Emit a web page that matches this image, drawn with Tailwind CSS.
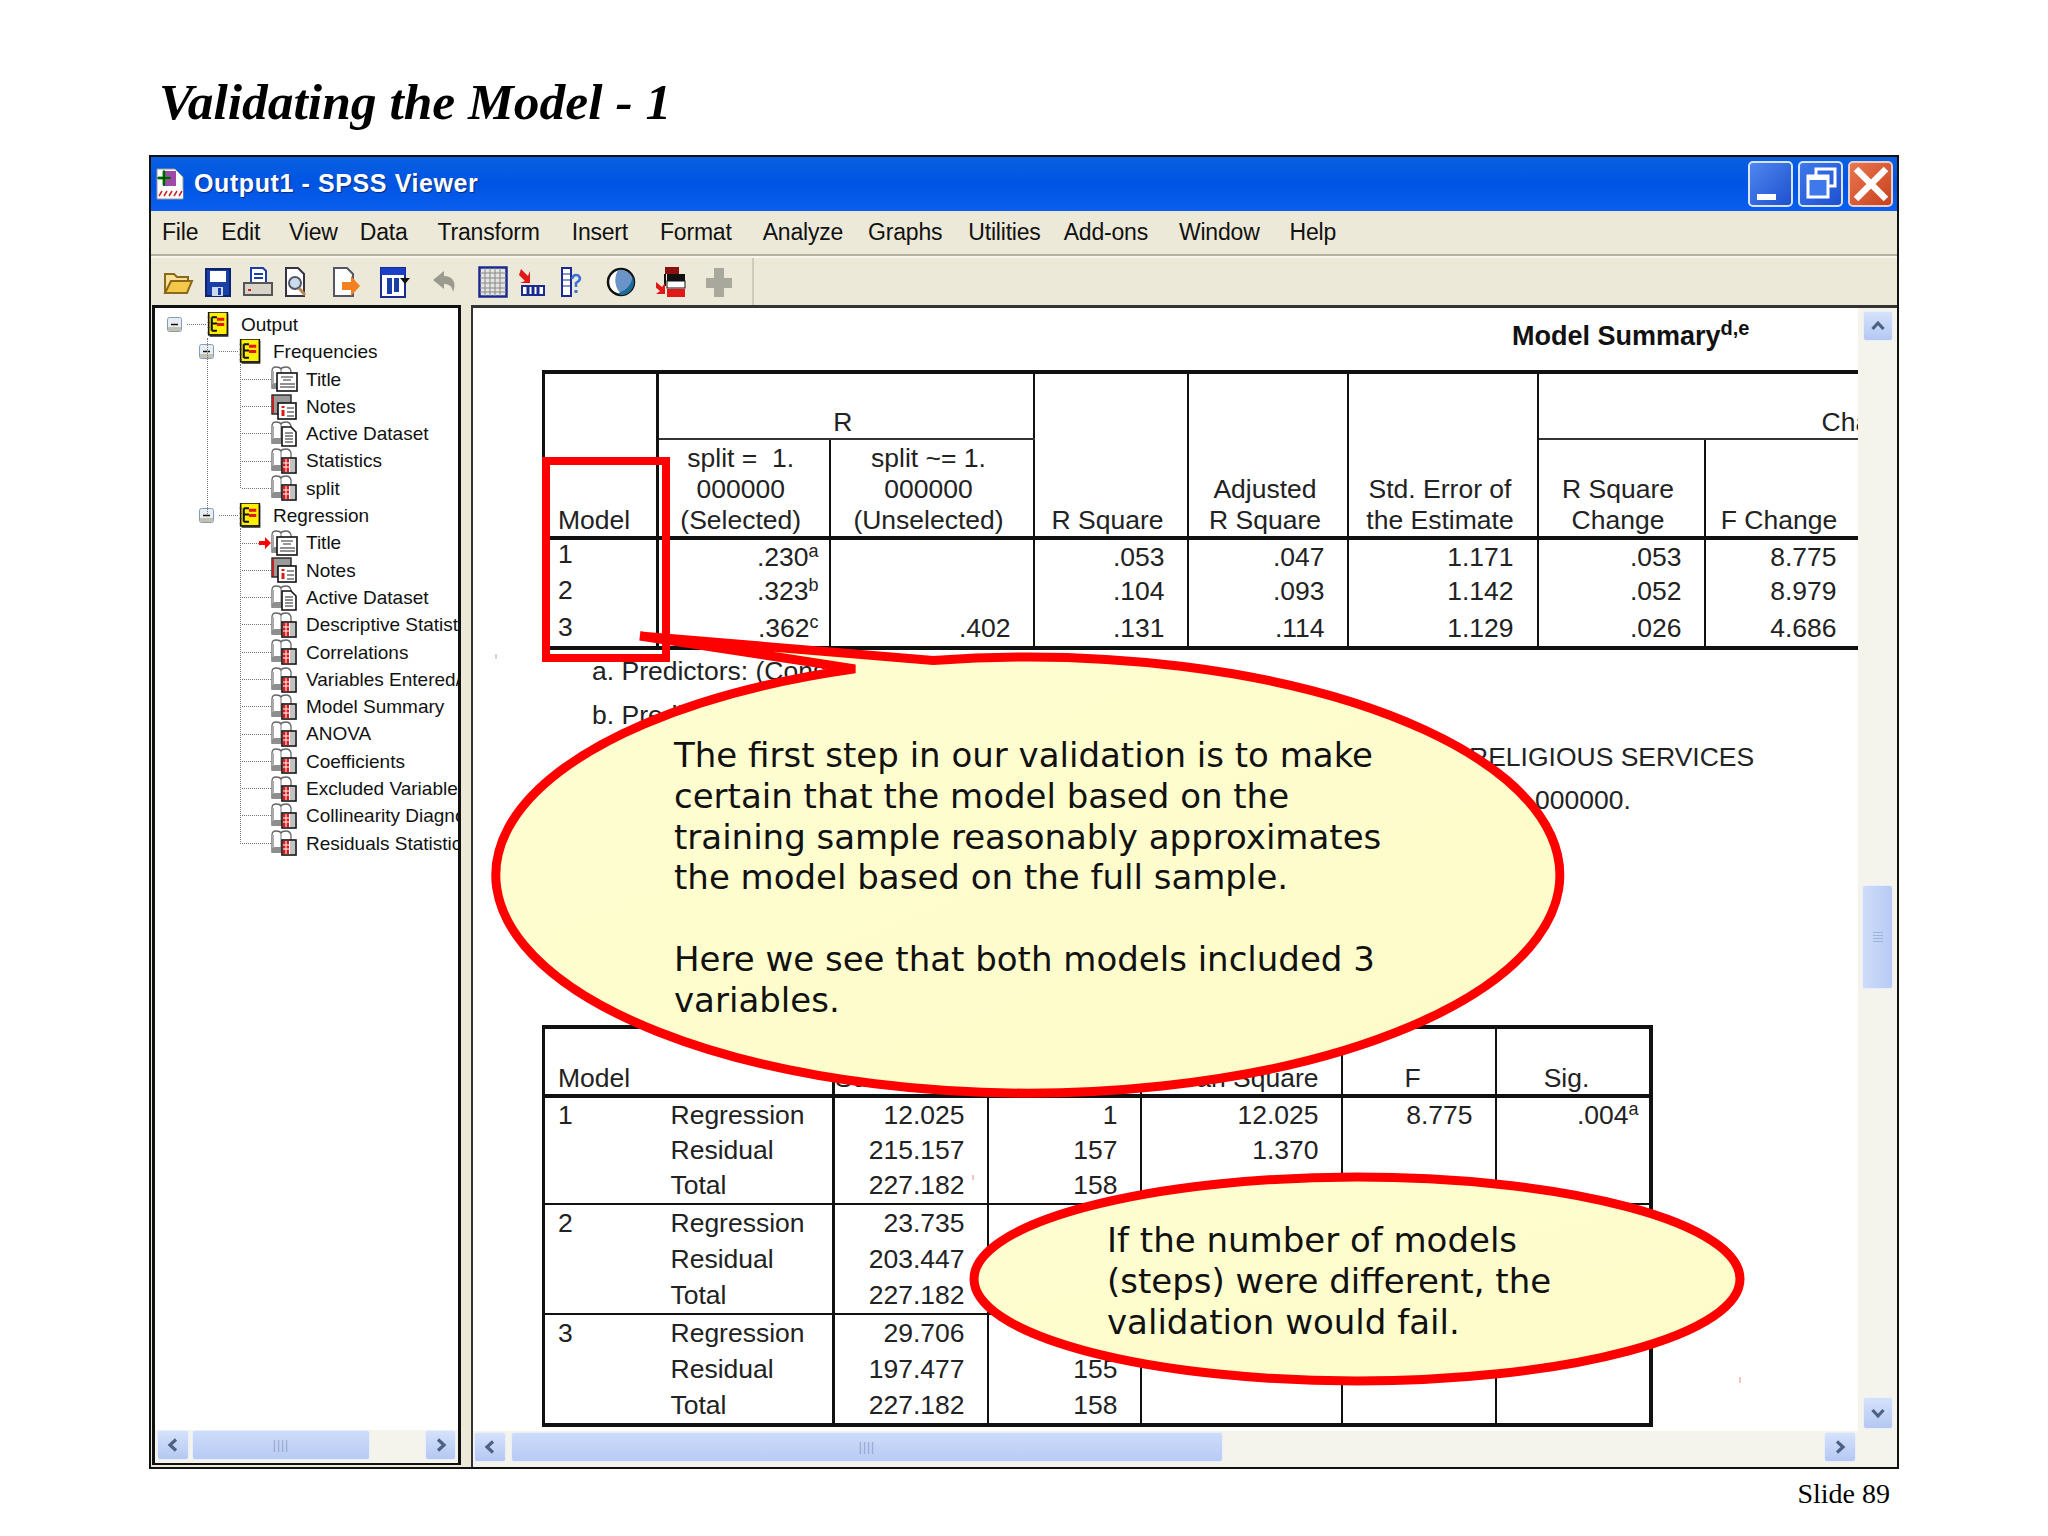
<!DOCTYPE html>
<html lang="en">
<head>
<meta charset="UTF-8">
<title>Validating the Model - 1</title>
<script src="https://cdn.jsdelivr.net/npm/@tailwindcss/browser@4"></script>
</head>
<body class="bg-white">
<!-- shared icon shapes for the output tree -->
<svg class="hidden">
  <symbol id="outline" viewBox="0 0 22 25">
    <rect x="3" y="2" width="18" height="22" fill="#555"/>
    <rect x="2" y="0" width="18" height="22" fill="#ffef00" stroke="#111" stroke-width="1.5"/>
    <path d="M5 5v13M5 5h5M5 11h5M5 18h5" stroke="#111" stroke-width="2" fill="none"/>
    <path d="M10 7h7M10 12h7" stroke="#e01818" stroke-width="3"/>
    <path d="M1 5h2M1 10h2M1 15h2M1 20h2" stroke="#333" stroke-width="1"/>
  </symbol>
  <symbol id="book" viewBox="0 0 28 26">
    <path d="M1 22V5q0-4 4-4t5 2q1-2 5-2t5 4v17H1z" fill="#fff" stroke="#666" stroke-width="1.3"/>
    <path d="M1 17h14v6H1z" fill="#8e8e8e"/>
    <path d="M2 5v13" stroke="#aaa" stroke-width="2"/>
    <path d="M10 3v15" stroke="#777" stroke-width="1"/>
  </symbol>
  <symbol id="stat" viewBox="0 0 28 26">
    <use href="#book"/>
    <rect x="11" y="10" width="14" height="15" fill="#fff" stroke="#111" stroke-width="1.6"/>
    <path d="M12 11h6v13h-6z" fill="#e01818"/>
    <path d="M12 15h12M12 19h12M15 11v13M18.500 11v13M22 11v13" stroke="#fff" stroke-width="1"/>
    <path d="M19 11h5v13h-5z" fill="#9a9a9a" opacity=".6"/>
  </symbol>
  <symbol id="title" viewBox="0 0 28 26">
    <use href="#book"/>
    <rect x="6" y="7" width="20" height="18" fill="#fff" stroke="#111" stroke-width="1.6"/>
    <path d="M10 11h12M12 14h8" stroke="#777" stroke-width="1.5"/>
    <path d="M9 18h15M9 21h15" stroke="#222" stroke-width="1"/>
  </symbol>
  <symbol id="notes" viewBox="0 0 28 26">
    <rect x="1" y="1" width="19" height="19" fill="#9a9a9a" stroke="#222" stroke-width="1.4"/>
    <path d="M2 2v17" stroke="#c02020" stroke-width="2"/>
    <rect x="7" y="9" width="18" height="16" fill="#fff" stroke="#111" stroke-width="1.6"/>
    <path d="M12 12v2M12 16v6" stroke="#e01818" stroke-width="3"/>
    <path d="M16 14h7M16 18h7M16 22h7" stroke="#222" stroke-width="1"/>
  </symbol>
  <symbol id="doc" viewBox="0 0 28 26">
    <use href="#book"/>
    <path d="M11 6h9l5 5v14H11z" fill="#fff" stroke="#111" stroke-width="1.6"/>
    <path d="M14 12h8M14 15h8M14 18h8M14 21h8" stroke="#222" stroke-width="1"/>
  </symbol>
  <symbol id="left" viewBox="0 0 12 14"><path d="M9 1.500 3 7l6 5.500" fill="none" stroke="#4d6185" stroke-width="3.200"/></symbol>
  <symbol id="right" viewBox="0 0 12 14"><path d="M3 1.500 9 7l-6 5.500" fill="none" stroke="#4d6185" stroke-width="3.200"/></symbol>
  <symbol id="up" viewBox="0 0 14 12"><path d="M1.500 9 7 3l5.500 6" fill="none" stroke="#4d6185" stroke-width="3.200"/></symbol>
  <symbol id="down" viewBox="0 0 14 12"><path d="M1.500 3 7 9l5.500-6" fill="none" stroke="#4d6185" stroke-width="3.200"/></symbol>
  <symbol id="minus" viewBox="0 0 15 15">
    <rect x=".5" y=".5" width="14" height="14" rx="2" fill="#e8edf2" stroke="#7f9db9"/>
    <rect x="1" y="10" width="13" height="4" fill="#c6c0b0"/>
    <path d="M4 7.500h7" stroke="#111" stroke-width="1.500"/>
  </symbol>
</svg>

<div class="relative w-[2048px] h-[1536px] overflow-hidden bg-white font-['Liberation_Sans',sans-serif]">
  <h1 class="h-[155px] pl-[159px] pt-[70px] text-[51.5px] leading-[64px] font-bold italic text-black font-['Liberation_Serif',serif]">Validating the Model - 1</h1>

  <!-- SPSS viewer window -->
  <div class="ml-[149px] w-[1750px] h-[1314px] border-2 border-[#111] bg-[#ece9d8] flex flex-col overflow-hidden">
    <div class="h-[54px] shrink-0 flex items-center pl-[4px] bg-gradient-to-b from-[#0a60e0] via-[#0054e3] to-[#0a5ff0]">
      <svg class="w-[30px] h-[32px]" viewBox="0 0 30 32">
        <path d="M2 1h18l8 8v22H2z" fill="#fff" stroke="#999"/>
        <rect x="8" y="3" width="13" height="15" fill="#a04aa8"/>
        <path d="M3 10h12M9 3v14" stroke="#0a0" stroke-width="3"/>
        <path d="M2 10h14M9 2v16" stroke="#111" stroke-width="1"/>
        <rect x="3" y="22" width="25" height="8" fill="#fff"/>
        <path d="M4 28l3-5M9 28l3-5M14 28l3-5M19 28l3-5M24 28l3-5" stroke="#d02020" stroke-width="1.500"/>
      </svg>
      <span class="ml-[9px] text-[25px] font-bold tracking-[0.6px] text-white [text-shadow:1px_1px_1px_#0a2a80]">Output1 - SPSS Viewer</span>
      <div class="ml-auto mr-[4px] flex gap-[5px]">
        <div class="w-[45px] h-[46px] rounded-[5px] border-2 border-[#d8e4fa] bg-gradient-to-br from-[#4f86ee] to-[#1f50cf] flex items-end pl-[7px] pb-[5px]"><div class="w-[19px] h-[6px] bg-white"></div></div>
        <div class="w-[45px] h-[46px] rounded-[5px] border-2 border-[#d8e4fa] bg-gradient-to-br from-[#3f78ea] to-[#1f50cf] flex items-center justify-center">
          <svg class="w-[36px] h-[36px]" viewBox="0 0 36 36" fill="none" stroke="#fff"><path d="M13 9V3h19v17h-8" stroke-width="3"/><rect x="5" y="10" width="20" height="21" fill="#3f78ea" stroke-width="3"/><path d="M5 12h20" stroke-width="4"/></svg>
        </div>
        <div class="w-[45px] h-[46px] rounded-[5px] border-2 border-[#e8d0c8] bg-gradient-to-br from-[#e8764e] to-[#c8401c] flex items-center justify-center">
          <svg class="w-[36px] h-[36px]" viewBox="0 0 36 36"><path d="M3 3l30 30M33 3L3 33" stroke="#fff" stroke-width="6.500"/></svg>
        </div>
      </div>
    </div>

    <div class="h-[45px] shrink-0 flex items-center pl-[11px] text-[23px] tracking-[-0.2px] text-[#111] border-b-2 border-[#b5b19f]">
      <span>File</span><span class="ml-[23px]">Edit</span><span class="ml-[29px]">View</span><span class="ml-[22px]">Data</span><span class="ml-[30px]">Transform</span><span class="ml-[32px]">Insert</span><span class="ml-[32px]">Format</span><span class="ml-[31px]">Analyze</span><span class="ml-[25px]">Graphs</span><span class="ml-[26px]">Utilities</span><span class="ml-[23px]">Add-ons</span><span class="ml-[31px]">Window</span><span class="ml-[30px]">Help</span>
    </div>

    <div class="h-[49px] shrink-0 flex items-center pl-[11px] border-t-2 border-[#f8f6ec]">
      <svg class="w-[32px] h-[32px]" viewBox="0 0 32 32"><path d="M3 27V8h9l3 3h11v5" fill="#f8e098" stroke="#8a6a1a" stroke-width="2"/><path d="M3 27l6-12h21l-5 12z" fill="#f5c84a" stroke="#8a6a1a" stroke-width="2"/></svg>
      <svg class="w-[32px] h-[32px] ml-[8px]" viewBox="0 0 32 32"><path d="M4 3h24v27H4z" fill="#1a3fa8" stroke="#0a2470" stroke-width="2"/><rect x="8" y="5" width="16" height="11" fill="#fff"/><rect x="10" y="21" width="11" height="9" fill="#cdd8ee"/><rect x="16" y="22" width="3" height="7" fill="#1a3fa8"/></svg>
      <svg class="w-[32px] h-[32px] ml-[8px]" viewBox="0 0 32 32"><path d="M9 2h12l3 3v15H9z" fill="#fff" stroke="#1a3fa8" stroke-width="2"/><path d="M12 8h9M12 12h9" stroke="#1a3fa8" stroke-width="2"/><rect x="2" y="17" width="28" height="12" fill="#d8d4c8" stroke="#555" stroke-width="2"/><path d="M6 24h3" stroke="#d02020" stroke-width="2"/></svg>
      <svg class="w-[28px] h-[32px] ml-[8px]" viewBox="0 0 28 32"><path d="M4 2h12l6 6v22H4z" fill="#fff" stroke="#334" stroke-width="2"/><circle cx="13" cy="17" r="6" fill="#c8dcec" stroke="#556" stroke-width="2"/><path d="M17 22l6 7" stroke="#b88a50" stroke-width="3"/></svg>
      <svg class="w-[32px] h-[32px] ml-[20px]" viewBox="0 0 32 32"><path d="M4 2h13l6 6v22H4z" fill="#fff" stroke="#556" stroke-width="2"/><path d="M12 16h9v-6l9 10-9 10v-6h-9z" fill="#f08020"/></svg>
      <svg class="w-[32px] h-[32px] ml-[16px]" viewBox="0 0 32 32"><rect x="3" y="2" width="24" height="29" fill="#fff" stroke="#1a2a90" stroke-width="2"/><rect x="3" y="2" width="24" height="7" fill="#1a3fc8"/><path d="M9 12h5v16H9zM16 12h5v14h-5z" fill="#1a3fa8"/><path d="M22 12h10l-5 6z" fill="#111"/></svg>
      <svg class="w-[28px] h-[28px] ml-[21px]" viewBox="0 0 28 28"><path d="M13 3L2 12l11 9v-5c5 0 8 2 9 8 4-9 0-16-9-16z" fill="#9a9a8e"/></svg>
      <svg class="w-[30px] h-[32px] ml-[19px]" viewBox="0 0 30 32"><rect x="1.500" y="1.500" width="27" height="29" fill="#e4e4e0" stroke="#1a2a90" stroke-width="2.500"/><path d="M2 7h26M2 12h26M2 17h26M2 22h26M2 26h26M7 2v28M12 2v28M17 2v28M22 2v28" stroke="#888" stroke-width="1"/></svg>
      <svg class="w-[26px] h-[30px] ml-[11px]" viewBox="0 0 26 30"><path d="M2 2l7 7 2-5v12H1l5-2-6-6z" fill="#e01818"/><rect x="3" y="19" width="22" height="9" fill="#fff" stroke="#1a2a90" stroke-width="2"/><path d="M9 19v9M14 19v9M19 19v9" stroke="#1a2a90" stroke-width="3"/></svg>
      <svg class="w-[22px] h-[32px] ml-[15px]" viewBox="0 0 22 32"><rect x="2" y="2" width="9" height="28" fill="#fff" stroke="#1a2a90" stroke-width="2"/><path d="M2 8h9M2 14h9M2 20h9" stroke="#1a2a90"/><path d="M12 13q1-4 4-4t4 3q0 3-4 5v4" fill="none" stroke="#3a70d8" stroke-width="2.500"/><rect x="14.500" y="24" width="3" height="3" fill="#3a70d8"/></svg>
      <svg class="w-[30px] h-[32px] ml-[24px]" viewBox="0 0 30 32"><circle cx="15" cy="16" r="13" fill="#fff" stroke="#111" stroke-width="2.500"/><path d="M12 4a13 13 0 0 1 15 15a13 13 0 0 1-11 10a20 20 0 0 1-4-25z" fill="#6a94c8"/><path d="M28 16a13 13 0 0 1-13 13c-2 0-2-1-2-2a22 22 0 0 0 14-17z" fill="#1a6a9a"/></svg>
      <svg class="w-[30px] h-[32px] ml-[20px]" viewBox="0 0 30 32"><rect x="9" y="1" width="14" height="7" fill="#8a1010"/><rect x="11" y="8" width="18" height="7" fill="#111"/><rect x="11" y="15" width="18" height="7" fill="#fff" stroke="#111"/><rect x="11" y="23" width="18" height="8" fill="#e01818"/><path d="M9 8v12" stroke="#111" stroke-width="2"/><path d="M0 16l6 5 3-4v11H0l4-3-5-4z" fill="#e01818"/></svg>
      <svg class="w-[26px] h-[30px] ml-[20px]" viewBox="0 0 26 30"><path d="M8 1h10v10h8v10h-8v9H8v-9H0V11h8z" fill="#a8a89c"/></svg>
      <div class="ml-[20px] w-[2px] h-[47px] bg-[#cfccba]"></div>
    </div>

    <div class="flex-1 min-h-0 flex pl-[1px]">
      <!-- output tree -->
      <div class="w-[309px] h-[1160px] shrink-0 border-l-[3px] border-t-[3px] border-r-[3px] border-b-2 border-[#111] bg-white flex flex-col">
        <div class="relative flex-1 min-h-0 pt-[3px] overflow-hidden text-[19px] leading-[27.3px] text-[#111] whitespace-nowrap">
          <div class="absolute left-[52px] top-[30px] h-[176px] border-l border-dotted border-[#777]"></div>
          <div class="absolute left-[85px] top-[56px] h-[124px] border-l border-dotted border-[#777]"></div>
          <div class="absolute left-[85px] top-[220px] h-[316px] border-l border-dotted border-[#777]"></div>

          <div class="flex w-max items-center h-[27.3px]"><svg class="ml-[12px] w-[15px] h-[15px]"><use href="#minus"/></svg><span class="ml-[5px] w-[19px] border-t border-dotted border-[#777]"></span><svg class="w-[24px] h-[26px]"><use href="#outline"/></svg><span class="ml-[11px]">Output</span></div>
          <div class="flex w-max items-center h-[27.3px]"><svg class="ml-[44px] w-[15px] h-[15px]"><use href="#minus"/></svg><span class="ml-[5px] w-[19px] border-t border-dotted border-[#777]"></span><svg class="w-[24px] h-[26px]"><use href="#outline"/></svg><span class="ml-[11px]">Frequencies</span></div>
          <div class="flex w-max items-center h-[27.3px]"><span class="ml-[87px] w-[29px] border-t border-dotted border-[#777]"></span><svg class="w-[28px] h-[26px]"><use href="#title"/></svg><span class="ml-[7px]">Title</span></div>
          <div class="flex w-max items-center h-[27.3px]"><span class="ml-[87px] w-[29px] border-t border-dotted border-[#777]"></span><svg class="w-[28px] h-[26px]"><use href="#notes"/></svg><span class="ml-[7px]">Notes</span></div>
          <div class="flex w-max items-center h-[27.3px]"><span class="ml-[87px] w-[29px] border-t border-dotted border-[#777]"></span><svg class="w-[28px] h-[26px]"><use href="#doc"/></svg><span class="ml-[7px]">Active Dataset</span></div>
          <div class="flex w-max items-center h-[27.3px]"><span class="ml-[87px] w-[29px] border-t border-dotted border-[#777]"></span><svg class="w-[28px] h-[26px]"><use href="#stat"/></svg><span class="ml-[7px]">Statistics</span></div>
          <div class="flex w-max items-center h-[27.3px]"><span class="ml-[87px] w-[29px] border-t border-dotted border-[#777]"></span><svg class="w-[28px] h-[26px]"><use href="#stat"/></svg><span class="ml-[7px]">split</span></div>
          <div class="flex w-max items-center h-[27.3px]"><svg class="ml-[44px] w-[15px] h-[15px]"><use href="#minus"/></svg><span class="ml-[5px] w-[19px] border-t border-dotted border-[#777]"></span><svg class="w-[24px] h-[26px]"><use href="#outline"/></svg><span class="ml-[11px]">Regression</span></div>
          <div class="flex w-max items-center h-[27.3px]"><span class="ml-[87px] w-[17px] border-t border-dotted border-[#777]"></span><svg class="w-[12px] h-[12px]" viewBox="0 0 12 12"><path d="M0 4h6V0l6 6-6 6V8H0z" fill="#f00"/></svg><svg class="w-[28px] h-[26px]"><use href="#title"/></svg><span class="ml-[7px]">Title</span></div>
          <div class="flex w-max items-center h-[27.3px]"><span class="ml-[87px] w-[29px] border-t border-dotted border-[#777]"></span><svg class="w-[28px] h-[26px]"><use href="#notes"/></svg><span class="ml-[7px]">Notes</span></div>
          <div class="flex w-max items-center h-[27.3px]"><span class="ml-[87px] w-[29px] border-t border-dotted border-[#777]"></span><svg class="w-[28px] h-[26px]"><use href="#doc"/></svg><span class="ml-[7px]">Active Dataset</span></div>
          <div class="flex w-max items-center h-[27.3px]"><span class="ml-[87px] w-[29px] border-t border-dotted border-[#777]"></span><svg class="w-[28px] h-[26px]"><use href="#stat"/></svg><span class="ml-[7px]">Descriptive Statistics</span></div>
          <div class="flex w-max items-center h-[27.3px]"><span class="ml-[87px] w-[29px] border-t border-dotted border-[#777]"></span><svg class="w-[28px] h-[26px]"><use href="#stat"/></svg><span class="ml-[7px]">Correlations</span></div>
          <div class="flex w-max items-center h-[27.3px]"><span class="ml-[87px] w-[29px] border-t border-dotted border-[#777]"></span><svg class="w-[28px] h-[26px]"><use href="#stat"/></svg><span class="ml-[7px]">Variables Entered/Removed</span></div>
          <div class="flex w-max items-center h-[27.3px]"><span class="ml-[87px] w-[29px] border-t border-dotted border-[#777]"></span><svg class="w-[28px] h-[26px]"><use href="#stat"/></svg><span class="ml-[7px]">Model Summary</span></div>
          <div class="flex w-max items-center h-[27.3px]"><span class="ml-[87px] w-[29px] border-t border-dotted border-[#777]"></span><svg class="w-[28px] h-[26px]"><use href="#stat"/></svg><span class="ml-[7px]">ANOVA</span></div>
          <div class="flex w-max items-center h-[27.3px]"><span class="ml-[87px] w-[29px] border-t border-dotted border-[#777]"></span><svg class="w-[28px] h-[26px]"><use href="#stat"/></svg><span class="ml-[7px]">Coefficients</span></div>
          <div class="flex w-max items-center h-[27.3px]"><span class="ml-[87px] w-[29px] border-t border-dotted border-[#777]"></span><svg class="w-[28px] h-[26px]"><use href="#stat"/></svg><span class="ml-[7px]">Excluded Variables</span></div>
          <div class="flex w-max items-center h-[27.3px]"><span class="ml-[87px] w-[29px] border-t border-dotted border-[#777]"></span><svg class="w-[28px] h-[26px]"><use href="#stat"/></svg><span class="ml-[7px]">Collinearity Diagnostics</span></div>
          <div class="flex w-max items-center h-[27.3px]"><span class="ml-[87px] w-[29px] border-t border-dotted border-[#777]"></span><svg class="w-[28px] h-[26px]"><use href="#stat"/></svg><span class="ml-[7px]">Residuals Statistics</span></div>
        </div>
        <!-- tree scrollbar -->
        <div class="h-[33px] shrink-0 flex items-start gap-[3px] px-[2px] bg-[#f4f3ec]">
          <div class="w-[32px] h-[30px] rounded-[3px] border border-[#e8eefb] bg-gradient-to-b from-[#d6e2fb] to-[#b4c8f2] flex items-center justify-center"><svg class="w-[12px] h-[14px]"><use href="#left"/></svg></div>
          <div class="w-[178px] h-[30px] rounded-[3px] border border-[#e8eefb] bg-gradient-to-b from-[#cddcf9] to-[#b8cbf4] flex items-center justify-center text-[#8fa3cc] text-[12px] tracking-[1px]">||||</div>
          <div class="ml-auto w-[31px] h-[30px] rounded-[3px] border border-[#e8eefb] bg-gradient-to-b from-[#d6e2fb] to-[#b4c8f2] flex items-center justify-center"><svg class="w-[12px] h-[14px]"><use href="#right"/></svg></div>
        </div>
      </div>

      <div class="w-[10px] shrink-0"></div>

      <!-- output contents -->
      <div class="flex-1 min-w-0 h-[1164px] border-l-2 border-t-[3px] border-[#333] bg-white flex flex-col">
        <div class="flex-1 min-h-0 flex">
          <div class="w-[1385px] shrink-0 overflow-hidden text-[26.5px] text-[#222] whitespace-nowrap">
            <div class="pl-[1039px] h-[62px] pt-[11px] text-[27px] leading-[34px] font-bold text-[#111]">Model Summary<sup class="text-[20px]">d,e</sup></div>

            <div class="ml-[69px] w-[1316px] overflow-hidden">
              <table class="w-[1518px] table-fixed border-collapse leading-[31px]">
                <colgroup><col class="w-[114px]"><col class="w-[172px]"><col class="w-[204px]"><col class="w-[154px]"><col class="w-[160px]"><col class="w-[190px]"><col class="w-[167px]"><col class="w-[155px]"><col class="w-[202px]"></colgroup>
                <tr class="h-[67px]">
                  <th rowspan="2" class="align-bottom text-left font-normal pl-[13px] border-l-[3px] border-t-4 border-r-[3px] border-b-4 border-[#111]">Model</th>
                  <th colspan="2" class="align-bottom font-normal pr-[6px] border-t-4 border-r-2 border-b-2 border-[#111] border-b-[#333]">R</th>
                  <th rowspan="2" class="align-bottom font-normal pr-[6px] border-t-4 border-r-2 border-b-4 border-[#111]">R Square</th>
                  <th rowspan="2" class="align-bottom font-normal pr-[5px] border-t-4 border-r-2 border-b-4 border-[#111]">Adjusted<br>R Square</th>
                  <th rowspan="2" class="align-bottom font-normal pr-[5px] border-t-4 border-r-2 border-b-4 border-[#111]">Std. Error of<br>the Estimate</th>
                  <th colspan="3" class="align-bottom text-left font-normal pl-[283px] border-t-4 border-b-2 border-[#111] border-b-[#333]">Change Statistics</th>
                </tr>
                <tr class="h-[99px]">
                  <th class="align-bottom font-normal pr-[6px] border-r-2 border-b-4 border-[#111]">split = &nbsp;1.<br>000000<br>(Selected)</th>
                  <th class="align-bottom font-normal pr-[6px] border-r-2 border-b-4 border-[#111]">split ~= 1.<br>000000<br>(Unselected)</th>
                  <th class="align-bottom font-normal pr-[6px] border-r-2 border-b-4 border-[#111]">R Square<br>Change</th>
                  <th class="align-bottom font-normal pr-[6px] border-r-2 border-b-4 border-[#111]">F Change</th>
                  <th class="border-b-4 border-[#111]"></th>
                </tr>
                <tr class="h-[35px] leading-[26px]">
                  <td class="pl-[13px] pb-[6px] border-l-[3px] border-r-[3px] border-[#111]">1</td>
                  <td class="text-right pr-[10px] border-r-2 border-[#111]">.230<sup class="text-[18px]">a</sup></td>
                  <td class="border-r-2 border-[#111]"></td>
                  <td class="text-right pr-[22px] border-r-2 border-[#111]">.053</td>
                  <td class="text-right pr-[22px] border-r-2 border-[#111]">.047</td>
                  <td class="text-right pr-[23px] border-r-2 border-[#111]">1.171</td>
                  <td class="text-right pr-[22px] border-r-2 border-[#111]">.053</td>
                  <td class="text-right pr-[22px] border-r-2 border-[#111]">8.775</td>
                  <td></td>
                </tr>
                <tr class="h-[36px] leading-[26px]">
                  <td class="pl-[13px] pb-[2px] border-l-[3px] border-r-[3px] border-[#111]">2</td>
                  <td class="text-right pr-[10px] border-r-2 border-[#111]">.323<sup class="text-[18px]">b</sup></td>
                  <td class="border-r-2 border-[#111]"></td>
                  <td class="text-right pr-[22px] border-r-2 border-[#111]">.104</td>
                  <td class="text-right pr-[22px] border-r-2 border-[#111]">.093</td>
                  <td class="text-right pr-[23px] border-r-2 border-[#111]">1.142</td>
                  <td class="text-right pr-[22px] border-r-2 border-[#111]">.052</td>
                  <td class="text-right pr-[22px] border-r-2 border-[#111]">8.979</td>
                  <td></td>
                </tr>
                <tr class="h-[39px] leading-[26px]">
                  <td class="pl-[13px] pb-[2px] border-l-[3px] border-r-[3px] border-b-4 border-[#111]">3</td>
                  <td class="text-right pr-[10px] border-r-2 border-b-4 border-[#111]">.362<sup class="text-[18px]">c</sup></td>
                  <td class="text-right pr-[22px] border-r-2 border-b-4 border-[#111]">.402</td>
                  <td class="text-right pr-[22px] border-r-2 border-b-4 border-[#111]">.131</td>
                  <td class="text-right pr-[22px] border-r-2 border-b-4 border-[#111]">.114</td>
                  <td class="text-right pr-[23px] border-r-2 border-b-4 border-[#111]">1.129</td>
                  <td class="text-right pr-[22px] border-r-2 border-b-4 border-[#111]">.026</td>
                  <td class="text-right pr-[22px] border-r-2 border-b-4 border-[#111]">4.686</td>
                  <td class="border-b-4 border-[#111]"></td>
                </tr>
              </table>
            </div>

            <p class="ml-[119px] mt-[5px] h-[44px] leading-[32px]">a. Predictors: (Constant)</p>
            <p class="ml-[119px] h-[42px] leading-[32px]">b. Predictors: (Constant)</p>
            <p class="ml-[996px] h-[43px] leading-[32px]">RELIGIOUS SERVICES</p>
            <p class="ml-[1062px] h-[241px] leading-[32px]">000000.</p>

            <table class="ml-[69px] w-[1107px] table-fixed border-collapse leading-[31px]">
              <colgroup><col class="w-[127px]"><col class="w-[163px]"><col class="w-[154px]"><col class="w-[153px]"><col class="w-[201px]"><col class="w-[154px]"><col class="w-[155px]"></colgroup>
              <tr class="h-[69px]">
                <th colspan="2" class="align-bottom text-left font-normal pl-[13px] border-l-[3px] border-t-4 border-r-[3px] border-b-4 border-[#111]">Model</th>
                <th class="align-bottom font-normal border-t-4 border-r-2 border-b-4 border-[#111]">Sum of Squares</th>
                <th class="align-bottom font-normal border-t-4 border-r-2 border-b-4 border-[#111]">df</th>
                <th class="align-bottom text-right font-normal pr-[22px] border-t-4 border-r-2 border-b-4 border-[#111]">Mean Square</th>
                <th class="align-bottom font-normal pr-[12px] border-t-4 border-r-2 border-b-4 border-[#111]">F</th>
                <th class="align-bottom font-normal pr-[12px] border-t-4 border-r-4 border-b-4 border-[#111]">Sig.</th>
              </tr>
              <tr class="h-[36px]">
                <td class="pl-[13px] border-l-[3px] border-[#111]">1</td><td>Regression</td>
                <td class="text-right pr-[22px] border-l-[3px] border-r-2 border-[#111]">12.025</td>
                <td class="text-right pr-[22px] border-r-2 border-[#111]">1</td>
                <td class="text-right pr-[22px] border-r-2 border-[#111]">12.025</td>
                <td class="text-right pr-[22px] border-r-2 border-[#111]">8.775</td>
                <td class="text-right pr-[10px] border-r-4 border-[#111]">.004<sup class="text-[18px]">a</sup></td>
              </tr>
              <tr class="h-[36px]">
                <td class="border-l-[3px] border-[#111]"></td><td>Residual</td>
                <td class="text-right pr-[22px] border-l-[3px] border-r-2 border-[#111]">215.157</td>
                <td class="text-right pr-[22px] border-r-2 border-[#111]">157</td>
                <td class="text-right pr-[22px] border-r-2 border-[#111]">1.370</td>
                <td class="border-r-2 border-[#111]"></td>
                <td class="border-r-4 border-[#111]"></td>
              </tr>
              <tr class="h-[36px]">
                <td class="border-l-[3px] border-b-2 border-[#111]"></td><td class="border-b-2 border-[#111]">Total</td>
                <td class="text-right pr-[22px] border-l-[3px] border-r-2 border-b-2 border-[#111]">227.182</td>
                <td class="text-right pr-[22px] border-r-2 border-b-2 border-[#111]">158</td>
                <td class="border-r-2 border-b-2 border-[#111]"></td>
                <td class="border-r-2 border-b-2 border-[#111]"></td>
                <td class="border-r-4 border-b-2 border-[#111]"></td>
              </tr>
              <tr class="h-[37px]">
                <td class="pl-[13px] border-l-[3px] border-[#111]">2</td><td>Regression</td>
                <td class="text-right pr-[22px] border-l-[3px] border-r-2 border-[#111]">23.735</td>
                <td class="border-r-2 border-[#111]"></td><td class="border-r-2 border-[#111]"></td><td class="border-r-2 border-[#111]"></td><td class="border-r-4 border-[#111]"></td>
              </tr>
              <tr class="h-[37px]">
                <td class="border-l-[3px] border-[#111]"></td><td>Residual</td>
                <td class="text-right pr-[22px] border-l-[3px] border-r-2 border-[#111]">203.447</td>
                <td class="border-r-2 border-[#111]"></td><td class="border-r-2 border-[#111]"></td><td class="border-r-2 border-[#111]"></td><td class="border-r-4 border-[#111]"></td>
              </tr>
              <tr class="h-[36px]">
                <td class="border-l-[3px] border-b-2 border-[#111]"></td><td class="border-b-2 border-[#111]">Total</td>
                <td class="text-right pr-[22px] border-l-[3px] border-r-2 border-b-2 border-[#111]">227.182</td>
                <td class="border-r-2 border-b-2 border-[#111]"></td><td class="border-r-2 border-b-2 border-[#111]"></td><td class="border-r-2 border-b-2 border-[#111]"></td><td class="border-r-4 border-b-2 border-[#111]"></td>
              </tr>
              <tr class="h-[37px]">
                <td class="pl-[13px] border-l-[3px] border-[#111]">3</td><td>Regression</td>
                <td class="text-right pr-[22px] border-l-[3px] border-r-2 border-[#111]">29.706</td>
                <td class="border-r-2 border-[#111]"></td><td class="border-r-2 border-[#111]"></td><td class="border-r-2 border-[#111]"></td><td class="border-r-4 border-[#111]"></td>
              </tr>
              <tr class="h-[37px]">
                <td class="border-l-[3px] border-[#111]"></td><td>Residual</td>
                <td class="text-right pr-[22px] border-l-[3px] border-r-2 border-[#111]">197.477</td>
                <td class="text-right pr-[22px] border-r-2 border-[#111]">155</td>
                <td class="border-r-2 border-[#111]"></td><td class="border-r-2 border-[#111]"></td><td class="border-r-4 border-[#111]"></td>
              </tr>
              <tr class="h-[37px]">
                <td class="border-l-[3px] border-b-4 border-[#111]"></td><td class="border-b-4 border-[#111]">Total</td>
                <td class="text-right pr-[22px] border-l-[3px] border-r-2 border-b-4 border-[#111]">227.182</td>
                <td class="text-right pr-[22px] border-r-2 border-b-4 border-[#111]">158</td>
                <td class="border-r-2 border-b-4 border-[#111]"></td><td class="border-r-2 border-b-4 border-[#111]"></td><td class="border-r-4 border-b-4 border-[#111]"></td>
              </tr>
            </table>
          </div>

          <!-- vertical scrollbar -->
          <div class="flex-1 flex flex-col items-center pt-[3px] pb-[2px] bg-[#f4f3ec]">
            <div class="w-[30px] h-[30px] rounded-[3px] border border-[#e8eefb] bg-gradient-to-b from-[#d6e2fb] to-[#b4c8f2] flex items-center justify-center"><svg class="w-[14px] h-[12px]"><use href="#up"/></svg></div>
            <div class="mt-[544px] w-[31px] h-[104px] rounded-[3px] border border-[#e8eefb] bg-gradient-to-r from-[#cddcf9] to-[#b8cbf4] flex flex-col items-center justify-center gap-[2px]"><div class="w-[10px] h-px bg-[#9fb3d8]"></div><div class="w-[10px] h-px bg-[#9fb3d8]"></div><div class="w-[10px] h-px bg-[#9fb3d8]"></div><div class="w-[10px] h-px bg-[#9fb3d8]"></div></div>
            <div class="mt-auto w-[30px] h-[32px] rounded-[3px] border border-[#e8eefb] bg-gradient-to-b from-[#d6e2fb] to-[#b4c8f2] flex items-center justify-center"><svg class="w-[14px] h-[12px]"><use href="#down"/></svg></div>
          </div>
        </div>

        <!-- horizontal scrollbar -->
        <div class="h-[38px] shrink-0 flex items-start pt-[1px] pl-[1px] bg-[#f4f3ec] border-b-2 border-[#eeeddf]">
          <div class="w-[32px] h-[30px] rounded-[3px] border border-[#e8eefb] bg-gradient-to-b from-[#d6e2fb] to-[#b4c8f2] flex items-center justify-center"><svg class="w-[12px] h-[14px]"><use href="#left"/></svg></div>
          <div class="ml-[5px] w-[712px] h-[30px] rounded-[3px] border border-[#e8eefb] bg-gradient-to-b from-[#cddcf9] to-[#b8cbf4] flex items-center justify-center text-[#8fa3cc] text-[12px] tracking-[1px]">||||</div>
          <div class="ml-[601px] w-[32px] h-[30px] rounded-[3px] border border-[#e8eefb] bg-gradient-to-b from-[#d6e2fb] to-[#b4c8f2] flex items-center justify-center"><svg class="w-[12px] h-[14px]"><use href="#right"/></svg></div>
        </div>
      </div>
    </div>
  </div>

  <p class="w-[1890px] mt-[9px] text-right text-[28px] leading-[32px] text-black font-['Liberation_Serif',serif]">Slide 89</p>

  <!-- red annotations over the window -->
  <svg class="absolute left-0 top-0 w-[2048px] h-[1536px] pointer-events-none" viewBox="0 0 2048 1536">
    <defs>
      <linearGradient id="cream" x1="0" y1="0" x2="1" y2="1"><stop offset="0" stop-color="#fffed2"/><stop offset="1" stop-color="#fdfbc8"/></linearGradient>
    </defs>
    <rect x="546" y="461" width="120" height="197" fill="none" stroke="#f00" stroke-width="8"/>
    <path d="M855 668.840A532 218 0 1 0 933 660.510L640 636Z" fill="url(#cream)" stroke="#f00" stroke-width="9"/>
    <ellipse cx="1357" cy="1279" rx="383" ry="102" fill="url(#cream)" stroke="#f00" stroke-width="9"/>
    <path d="M496 654v5M973 1175v5M1740 1377v6" stroke="#e88" stroke-width="1"/>
  </svg>
  <div class="absolute left-[674px] top-[735px] text-[34px] leading-[40.8px] text-[#111] whitespace-nowrap font-['DejaVu_Sans',sans-serif]">
    The first step in our validation is to make<br>certain that the model based on the<br>training sample reasonably approximates<br>the model based on the full sample.<br><br>Here we see that both models included 3<br>variables.
  </div>
  <div class="absolute left-[1107px] top-[1220px] text-[34px] leading-[40.8px] text-[#111] whitespace-nowrap font-['DejaVu_Sans',sans-serif]">
    If the number of models<br>(steps) were different, the<br>validation would fail.
  </div>
</div>
</body>
</html>
